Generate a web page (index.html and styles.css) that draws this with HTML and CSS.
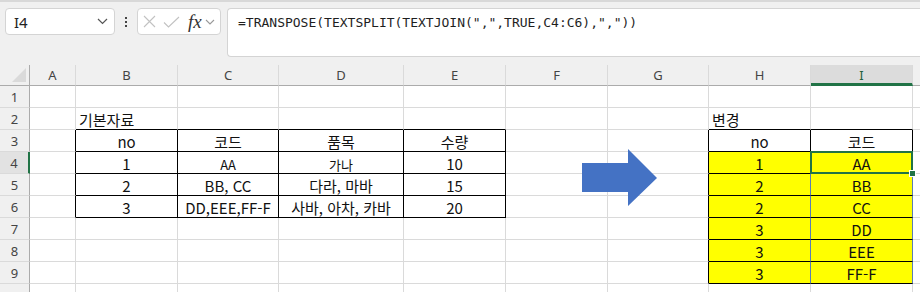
FILE: index.html
```html
<!DOCTYPE html>
<html lang="ko">
<head>
    <meta charset="UTF-8">
    <title>TRANSPOSE TEXTSPLIT</title>
    <link rel="stylesheet" href="styles.css">
</head>
<body>
    <div class="fbar">
        <div class="namebox">
            <span>I4</span>
            <svg width="11" height="7" viewBox="0 0 11 7"><path d="M1 1L5.5 5.5L10 1" fill="none" stroke="#555" stroke-width="1.2"/></svg>
        </div>
        <div class="dots"><i></i><i></i><i></i></div>
        <div class="fxbox">
            <svg width="13" height="13" viewBox="0 0 13 13"><path d="M1 1L12 12M12 1L1 12" stroke="#c2c2c2" stroke-width="1.1"/></svg>
            <svg width="17" height="12" viewBox="0 0 17 12"><path d="M1 6.5L5.5 11L16 1" fill="none" stroke="#c2c2c2" stroke-width="1.1"/></svg>
            <span class="fx">fx</span>
            <svg width="10" height="6" viewBox="0 0 10 6"><path d="M1 1L5 5L9 1" fill="none" stroke="#999" stroke-width="1.1"/></svg>
        </div>
        <div class="formula">=TRANSPOSE(TEXTSPLIT(TEXTJOIN(",",TRUE,C4:C6),","))</div>
    </div>

    <div class="sheet">
        <div class="corner"></div>
        <div class="ch">A</div><div class="ch">B</div><div class="ch">C</div><div class="ch">D</div><div class="ch">E</div>
        <div class="ch">F</div><div class="ch">G</div><div class="ch">H</div><div class="ch on">I</div><div class="ch"></div>

        <div class="rh">1</div>
        <div class="c"></div><div class="c"></div><div class="c"></div><div class="c"></div><div class="c"></div>
        <div class="c"></div><div class="c"></div><div class="c"></div><div class="c"></div><div class="c"></div>

        <div class="rh">2</div>
        <div class="c"></div><div class="c bb">기본자료</div><div class="c bb"></div><div class="c bb"></div><div class="c bb"></div>
        <div class="c"></div><div class="c"></div><div class="c bb">변경</div><div class="c bb"></div><div class="c"></div>

        <div class="rh">3</div>
        <div class="c br"></div><div class="c tb">no</div><div class="c tb">코드</div><div class="c tb">품목</div><div class="c tb">수량</div>
        <div class="c"></div><div class="c br"></div><div class="c tb">no</div><div class="c tb">코드</div><div class="c"></div>

        <div class="rh on">4</div>
        <div class="c br"></div><div class="c tb">1</div><div class="c tb sm">AA</div><div class="c tb sm">가나</div><div class="c tb">10</div>
        <div class="c"></div><div class="c br"></div><div class="c tb y sl">1</div><div class="c tb y sr sel">AA</div><div class="c"></div>

        <div class="rh">5</div>
        <div class="c br"></div><div class="c tb">2</div><div class="c tb">BB, CC</div><div class="c tb">다라, 마바</div><div class="c tb">15</div>
        <div class="c"></div><div class="c br"></div><div class="c tb y sl">2</div><div class="c tb y sr">BB</div><div class="c"></div>

        <div class="rh">6</div>
        <div class="c br"></div><div class="c tb">3</div><div class="c tb">DD,EEE,FF-F</div><div class="c tb">사바, 아차, 카바</div><div class="c tb">20</div>
        <div class="c"></div><div class="c br"></div><div class="c tb y sl">2</div><div class="c tb y sr">CC</div><div class="c"></div>

        <div class="rh">7</div>
        <div class="c"></div><div class="c"></div><div class="c"></div><div class="c"></div><div class="c"></div>
        <div class="c"></div><div class="c br"></div><div class="c tb y sl">3</div><div class="c tb y sr">DD</div><div class="c"></div>

        <div class="rh">8</div>
        <div class="c"></div><div class="c"></div><div class="c"></div><div class="c"></div><div class="c"></div>
        <div class="c"></div><div class="c br"></div><div class="c tb y sl">3</div><div class="c tb y sr">EEE</div><div class="c"></div>

        <div class="rh">9</div>
        <div class="c"></div><div class="c"></div><div class="c"></div><div class="c"></div><div class="c"></div>
        <div class="c"></div><div class="c br"></div><div class="c tb y sl">3</div><div class="c tb y sr">FF-F</div><div class="c"></div>

        <div class="rh"></div>
        <div class="c"></div><div class="c"></div><div class="c"></div><div class="c"></div><div class="c"></div>
        <div class="c"></div><div class="c"></div><div class="c"></div><div class="c"></div><div class="c"></div>

        <!-- block arrow shape floating over the sheet -->
        <svg class="arrow" width="76" height="58" viewBox="0 0 76 58">
            <polygon points="0,14 46,14 46,0 75,29 46,57 46,43 0,43" fill="#4472c4"/>
        </svg>
    </div>
</body>
</html>
```

FILE: styles.css
```css
body {
    margin: 0;
    background-color: #f0f0f0;
    overflow: hidden;
    font-family: "Noto Sans CJK KR", sans-serif;
}

.fbar {
    display: flex;
    align-items: flex-start;
    height: 57px;
    box-sizing: border-box;
    padding: 6px 0 0 5px;
    border-top: 2px solid #d8d8d8;
}

.namebox {
    width: 110px;
    height: 27px;
    box-sizing: border-box;
    display: flex;
    align-items: center;
    justify-content: space-between;
    padding: 0 6px 0 8px;
    background: #fff;
    border: 1px solid #d4d4d4;
    border-radius: 4px;
    font-family: "Noto Sans", sans-serif;
    font-size: 15px;
    color: #222;
}

.dots {
    width: 22px;
    height: 27px;
    display: flex;
    flex-direction: column;
    align-items: center;
    justify-content: center;
    gap: 2px;
}

.dots i {
    width: 2px;
    height: 2px;
    background: #444;
}

.fxbox {
    width: 84px;
    height: 27px;
    box-sizing: border-box;
    display: flex;
    align-items: center;
    gap: 7px;
    padding-left: 5px;
    background: #fff;
    border: 1px solid #d4d4d4;
    border-radius: 4px;
}

.fx {
    font-family: "Liberation Serif", serif;
    font-style: italic;
    font-size: 19px;
    color: #333;
    margin-left: 1px;
    margin-right: -4px;
}

.formula {
    flex: 1;
    height: 49px;
    box-sizing: border-box;
    margin-left: 6px;
    padding: 5px 0 0 10px;
    background: #fff;
    border: 1px solid #d4d4d4;
    border-right: none;
    border-radius: 4px 0 0 4px;
    font-family: "DejaVu Sans Mono", monospace;
    font-size: 13px;
    line-height: 18px;
    color: #1e1e1e;
    white-space: nowrap;
}

.sheet {
    position: relative;
    margin-top: 8px;
    display: grid;
    grid-template-columns: 30px 46px 102px 101px 125px 102px 102px 101px 102px 102px 102px;
    grid-template-rows: 21px;
    grid-auto-rows: 22px;
    background: #fff;
}

.corner {
    position: relative;
    background: #f0f0f0;
    border-right: 1px solid #ababab;
    border-bottom: 1px solid #ababab;
}

.corner::after {
    content: "";
    position: absolute;
    right: 3px;
    bottom: 3px;
    width: 14px;
    height: 14px;
    background: #dadada;
    clip-path: polygon(100% 0, 100% 100%, 0 100%);
}

.ch,
.rh {
    background: #f0f0f0;
    text-align: center;
    font-family: "Noto Sans", sans-serif;
    font-size: 13px;
    color: #444;
}

.ch {
    line-height: 20px;
    border-right: 1px solid #dadada;
    border-bottom: 1px solid #ababab;
}

.ch.on {
    background: #dcdcdc;
    color: #1e5e3c;
    border-bottom: 3px solid #217346;
}

.rh {
    line-height: 22px;
    border-right: 1px solid #ababab;
    border-bottom: 1px solid #dadada;
}

.rh.on {
    background: #e2e2e2;
    border-right: 2px solid #217346;
}

.c {
    box-sizing: border-box;
    padding: 0 3px;
    border-right: 1px solid #dadada;
    border-bottom: 1px solid #dadada;
    font-size: 15px;
    line-height: 23px;
    color: #111;
    white-space: nowrap;
}

.tb {
    text-align: center;
    border-right-color: #000;
    border-bottom-color: #000;
}

.br {
    border-right-color: #000;
}

.bb {
    border-bottom-color: #000;
}

.sm {
    font-size: 13px;
    line-height: 25px;
}

.y {
    background: #ffff00;
}

.sl,
.sr {
    border-right-color: #5a7db4;
}

.sel {
    position: relative;
    z-index: 1;
}

.sel::after {
    content: "";
    position: absolute;
    inset: -1px;
    border: 2px solid #217346;
}

.sel::before {
    content: "";
    position: absolute;
    right: -4px;
    bottom: -4px;
    width: 5px;
    height: 5px;
    background: #217346;
    border: 1px solid #fff;
    z-index: 2;
}

.arrow {
    position: absolute;
    left: 582px;
    top: 84px;
}
```
